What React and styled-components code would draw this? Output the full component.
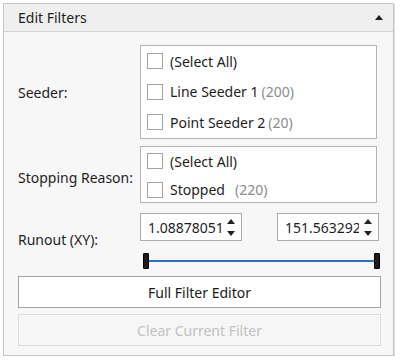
import React from 'react'
import styled, { createGlobalStyle } from 'styled-components'

const GlobalStyle = createGlobalStyle`
  body {
    margin: 0;
    background: #ffffff;
    font-family: "Noto Sans", "Open Sans", sans-serif;
    font-size: 14px;
    color: #1e1e1e;
  }
`

const Panel = styled.div`
  margin: 3px 0 0 3px;
  width: 391px;
  height: 353px;
  border: 1px solid #c6c6c6;
  box-shadow: 1px 1px 0 #dedede;
  background: #f7f7f7;
  display: flex;
  flex-direction: column;
  box-sizing: border-box;
`

const Header = styled.div`
  height: 27px;
  flex: none;
  background: #efefef;
  border-bottom: 1px solid #d2d2d2;
  display: flex;
  align-items: center;
  justify-content: space-between;
  padding: 0 10px 0 14px;
`

const Caret = styled.span`
  width: 0;
  height: 0;
  border-left: 4px solid transparent;
  border-right: 4px solid transparent;
  border-bottom: 5px solid #222;
`

const Body = styled.div`
  flex: 1;
  padding: 13px 12px 0 14px;
  display: grid;
  grid-template-columns: 122px 1fr;
  row-gap: 7px;
  align-content: start;
`

const Label = styled.div`
  align-self: center;
  white-space: nowrap;
  padding-top: ${p => p.$drop || 0}px;
`

const ListBox = styled.div`
  width: calc(100% - 4px);
  height: ${p => p.$height}px;
  box-sizing: border-box;
  border: 1px solid #b4b4b4;
  background: #ffffff;
  overflow: hidden;
`

const Item = styled.div`
  height: ${p => p.$row}px;
  display: flex;
  align-items: center;
  padding-left: 6px;
  gap: 7px;
  white-space: nowrap;
`

const Check = styled.span`
  width: 16px;
  height: 16px;
  box-sizing: border-box;
  border: 1px solid #a2a2a2;
  background: #fff;
  flex: none;
`

const Count = styled.span`
  color: #8c8c8c;
  margin-left: ${p => p.$gap || 3}px;
`

const RangeCell = styled.div`
  padding-top: 3px;
  display: flex;
  flex-direction: column;
  gap: 12px;
`

const Spinners = styled.div`
  display: flex;
  justify-content: space-between;
  padding-right: 2px;
`

const Spinner = styled.div`
  width: 102px;
  height: 28px;
  box-sizing: border-box;
  border: 1px solid #acacac;
  background: #fff;
  display: flex;
  align-items: center;
  padding: 0 6px 0 7px;
`

const SpinValue = styled.span`
  flex: 1;
  overflow: hidden;
  white-space: nowrap;
`

const Arrows = styled.span`
  display: flex;
  flex-direction: column;
  gap: 7px;
  margin-left: 5px;
`

const Arrow = styled.span`
  width: 0;
  height: 0;
  border-left: 4px solid transparent;
  border-right: 4px solid transparent;
  ${p => p.$up ? 'border-bottom: 5px solid #222;' : 'border-top: 5px solid #222;'}
`

const Slider = styled.div`
  position: relative;
  height: 16px;
  margin: 0 1px 0 3px;
  display: flex;
  align-items: center;
  justify-content: space-between;
`

const Track = styled.div`
  position: absolute;
  left: 4px;
  right: 4px;
  top: 7px;
  height: 2px;
  background: #2b72c6;
`

const Thumb = styled.span`
  position: relative;
  width: 6px;
  height: 16px;
  box-sizing: border-box;
  background: #1c1c1c;
  border: 1px solid #000;
  border-radius: 1px;
`

const Buttons = styled.div`
  grid-column: 1 / 3;
  display: flex;
  flex-direction: column;
  gap: 6px;
`

const Button = styled.button`
  height: 32px;
  box-sizing: border-box;
  font: inherit;
  border: 1px solid ${p => p.disabled ? '#dcdcdc' : '#a4a4a4'};
  background: ${p => p.disabled ? '#f6f6f6' : '#ffffff'};
  color: ${p => p.disabled ? '#c2c2c2' : '#1a1a1a'};
  padding: 0;
`

const seeders = [
  { name: '(Select All)' },
  { name: 'Line Seeder 1', count: 200 },
  { name: 'Point Seeder 2', count: 20 },
]

const reasons = [
  { name: '(Select All)' },
  { name: 'Stopped', count: 220, gap: 10 },
]

const CheckList = ({ items, height, row }) => (
  <ListBox $height={height}>
    {items.map(it => (
      <Item key={it.name} $row={row}>
        <Check />
        <span>
          {it.name}
          {it.count != null && <Count $gap={it.gap}>({it.count})</Count>}
        </span>
      </Item>
    ))}
  </ListBox>
)

const NumberBox = ({ value }) => (
  <Spinner>
    <SpinValue>{value}</SpinValue>
    <Arrows>
      <Arrow $up />
      <Arrow />
    </Arrows>
  </Spinner>
)

export default function App() {
  return (
    <>
      <GlobalStyle />
      <Panel>
        <Header>
          <span>Edit Filters</span>
          <Caret />
        </Header>
        <Body>
          <Label>Seeder:</Label>
          <CheckList items={seeders} height={94} row={30.5} />

          <Label $drop={5}>Stopping Reason:</Label>
          <CheckList items={reasons} height={57} row={28.5} />

          <Label>Runout (XY):</Label>
          <RangeCell>
            <Spinners>
              <NumberBox value="1.088780512" />
              <NumberBox value="151.563292" />
            </Spinners>
            <Slider>
              <Track />
              <Thumb />
              <Thumb />
            </Slider>
          </RangeCell>

          <Buttons>
            <Button>Full Filter Editor</Button>
            <Button disabled>Clear Current Filter</Button>
          </Buttons>
        </Body>
      </Panel>
    </>
  )
}
